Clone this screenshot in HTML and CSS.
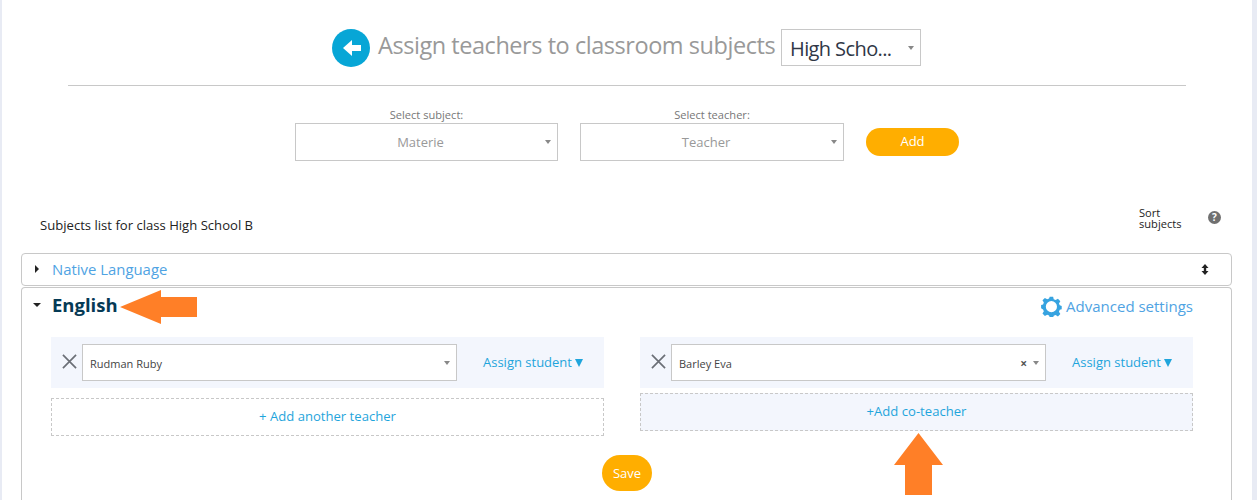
FILE: index.html
```html
<!DOCTYPE html>
<html lang="en">
<head>
<meta charset="utf-8">
<title>Assign teachers to classroom subjects</title>
<link rel="stylesheet" href="styles.css">
</head>
<body>
<main class="page">
  <header class="title-row">
    <svg class="back" viewBox="0 0 38 38" aria-hidden="true"><circle cx="19" cy="19" r="19" fill="#07a6d6"/><path d="M11 19l9-8v5h9v6h-9v5z" fill="#fff"/></svg>
    <h1 class="title">Assign teachers to classroom subjects</h1>
    <div class="select select-class"><span class="select-text">High Scho...</span><i class="caret"></i></div>
  </header>
  <hr class="rule">
  <section class="filters">
    <div class="field">
      <label class="field-label">Select subject:</label>
      <div class="select select-filter select-subject"><span class="select-center">Materie</span><i class="caret"></i></div>
    </div>
    <div class="field">
      <label class="field-label">Select teacher:</label>
      <div class="select select-filter select-teacher"><span class="select-center">Teacher</span><i class="caret"></i></div>
    </div>
    <button class="btn btn-add">Add</button>
  </section>
  <section class="list-head">
    <div class="list-title">Subjects list for class High School B</div>
    <div class="sort">Sort<br>subjects</div>
    <span class="help">?</span>
  </section>
  <section class="accordion">
    <div class="acc-row acc-closed">
      <i class="tri-right"></i>
      <span class="acc-name">Native Language</span>
      <svg class="updown" viewBox="0 0 8 11" aria-hidden="true"><path d="M4 0l3.500 4H5.200v3h2.300L4 11 .5 7h2.300V4H.5z" fill="#222"/></svg>
    </div>
    <div class="acc-row acc-open">
      <div class="acc-head">
        <i class="tri-down"></i>
        <span class="acc-name-open">English</span>
        <a class="advanced">
          <svg class="gear" viewBox="0 0 22 22" aria-hidden="true"><path fill="#36a3e0" fill-rule="evenodd" d="M9 0h4l.7 3 2.200.9 2.700-1.600 2.800 2.800-1.600 2.700.9 2.200 2.300.7v3.800l-2.300.7-.9 2.200 1.600 2.700-2.800 2.800-2.700-1.600-2.200.9L13 24H9l-.7-2.300-2.200-.9-2.700 1.600-2.800-2.800 1.600-2.700-.9-2.200L-1 13.300V9.700l2.300-.7.9-2.200L.6 4.100l2.800-2.800 2.700 1.600 2.200-.9zM11 5a6.500 6.500 0 1 0 0 13 6.500 6.500 0 0 0 0-13z" transform="translate(1 .8) scale(.9)"/></svg>
          Advanced settings
        </a>
      </div>
      <div class="teachers">
        <div class="teacher-col">
          <div class="band">
            <svg class="close" viewBox="0 0 16 16" aria-hidden="true"><path d="M1 1l14 14M15 1L1 15" stroke="#6b6f76" stroke-width="1.800" fill="none"/></svg>
            <div class="select select-teacher-name"><span class="select-text">Rudman Ruby</span><i class="caret"></i></div>
            <a class="assign">Assign student<i class="tri-blue"></i></a>
          </div>
          <div class="dashed dashed-plain">+ Add another teacher</div>
        </div>
        <div class="teacher-col">
          <div class="band">
            <svg class="close" viewBox="0 0 16 16" aria-hidden="true"><path d="M1 1l14 14M15 1L1 15" stroke="#6b6f76" stroke-width="1.800" fill="none"/></svg>
            <div class="select select-teacher-name"><span class="select-text">Barley Eva</span><span class="clear">×</span><i class="caret"></i></div>
            <a class="assign">Assign student<i class="tri-blue"></i></a>
          </div>
          <div class="dashed dashed-fill">+Add co-teacher</div>
        </div>
      </div>
      <div class="save-row"><button class="btn btn-save">Save</button></div>
    </div>
  </section>
</main>
<svg class="arrow arrow-left" viewBox="0 0 77 34" aria-hidden="true"><path d="M0 17L41 0v7h36v20H41v7z" fill="#ff7f27"/></svg>
<svg class="arrow arrow-up" viewBox="0 0 49 62" aria-hidden="true"><path d="M24.500 0L49 32H38v30H11V32H0z" fill="#ff7f27"/></svg>
</body>
</html>
```
FILE: styles.css
```css
* { box-sizing: border-box; }
html, body { margin: 0; height: 500px; overflow: hidden; }
body {
  background: #e8ebf4;
  font-family: "Open Sans", sans-serif;
  padding: 0 5px 0 2px;
  position: relative;
}
.page {
  background: #fff;
  height: 500px;
  padding-top: 29px;
  overflow: hidden;
}
.title-row {
  display: flex;
  align-items: flex-start;
  height: 38px;
  padding-left: 330px;
}
.back { width: 38px; height: 38px; flex: none; }
.title {
  margin: 0 0 0 8px;
  font-size: 23.500px;
  font-weight: 400;
  letter-spacing: -0.45px;
  line-height: 33px;
  color: #999;
  white-space: nowrap;
  width: 403px;
}
.select {
  position: relative;
  display: flex;
  align-items: center;
  background: #fff;
  border: 1px solid #c8c8c8;
}
.caret {
  position: absolute;
  top: 50%;
  right: 6px;
  margin-top: -2px;
  border-left: 3.500px solid transparent;
  border-right: 3.500px solid transparent;
  border-top: 4px solid #888;
}
.select-class {
  width: 140px;
  height: 37px;
  padding: 2px 0 0 8px;
  font-size: 20px;
  letter-spacing: -0.6px;
  color: #2f3746;
}
.rule {
  margin: 18px 0 0 66px;
  width: 1118px;
  height: 1px;
  border: 0;
  background: #c8c8c8;
}
.filters {
  display: flex;
  align-items: flex-end;
  margin-top: 21px;
  padding-left: 293px;
}
.field { display: flex; flex-direction: column; align-items: center; }
.field + .field { margin-left: 22px; }
.field-label {
  font-size: 11.100px;
  line-height: 15px;
  height: 16px;
  color: #777;
}
.select-filter { height: 38px; justify-content: center; }
.select-subject { width: 263px; }
.select-teacher { width: 264px; }
.select-center { font-size: 13px; color: #999; padding-right: 12px; }
.btn {
  border: 0;
  background: #ffae00;
  color: #fff;
  font: 400 13px "Open Sans", sans-serif;
  padding: 0;
}
.btn-add {
  width: 93px;
  height: 28px;
  margin: 0 0 5px 22px;
  border-radius: 14px;
  padding-bottom: 2px;
}
.list-head {
  position: relative;
  height: 92px;
}
.list-title {
  position: absolute;
  left: 38px;
  top: 55px;
  font-size: 13.100px;
  line-height: 18px;
  color: #222;
}
.sort {
  position: absolute;
  left: 1137px;
  top: 46px;
  font-size: 11.100px;
  line-height: 11px;
  color: #222;
}
.help {
  position: absolute;
  left: 1206px;
  top: 50px;
  width: 13px;
  height: 13px;
  border-radius: 50%;
  background: #707070;
  color: #fff;
  font-size: 10px;
  font-weight: 700;
  line-height: 13px;
  text-align: center;
}
.accordion { margin: 0 20px 0 19px; }
.acc-row { border: 1px solid #c8c8c8; border-radius: 4px; }
.acc-closed {
  display: flex;
  align-items: center;
  height: 33px;
  margin-bottom: 1px;
  padding: 0 22px 1px 13px;
}
.tri-right {
  border-top: 4px solid transparent;
  border-bottom: 4px solid transparent;
  border-left: 4px solid #222;
}
.acc-name {
  margin-left: 13px;
  font-size: 14.900px;
  color: #4fa3e3;
}
.updown { width: 8px; height: 11px; margin-left: auto; }
.acc-open {
  height: 230px;
  border-bottom: 0;
  border-bottom-left-radius: 0;
  border-bottom-right-radius: 0;
}
.acc-head {
  display: flex;
  align-items: center;
  height: 37px;
  padding: 0 38px 4px 11px;
}
.tri-down {
  border-left: 4px solid transparent;
  border-right: 4px solid transparent;
  border-top: 4px solid #222;
}
.acc-name-open {
  margin-left: 11px;
  font-size: 18.500px;
  font-weight: 700;
  color: #053a55;
}
.advanced {
  display: flex;
  align-items: center;
  margin-left: auto;
  font-size: 15px;
  color: #4fa3e3;
  position: relative;
  top: 1px;
}
.gear { width: 21px; height: 21px; margin-right: 5px; position: relative; left: 1px; top: 1px; }
.teachers {
  display: flex;
  gap: 36px;
  margin-top: 12px;
  padding-left: 29px;
}
.teacher-col { width: 553px; }
.band {
  display: flex;
  align-items: center;
  height: 51px;
  padding-left: 11px;
  background: #f3f6fd;
}
.close { width: 15px; height: 15px; flex: none; position: relative; top: -1px; }
.select-teacher-name {
  width: 375px;
  height: 37px;
  margin-left: 5px;
  padding: 2px 0 0 7px;
  font-size: 11px;
  color: #444;
}
.clear {
  position: absolute;
  right: 18px;
  top: 12px;
  font-size: 12px;
  font-weight: 700;
  line-height: 14px;
  color: #555;
}
.assign {
  margin-left: 26px;
  font-size: 13px;
  color: #1fa5dc;
  white-space: nowrap;
  padding-bottom: 2px;
}
.tri-blue {
  display: inline-block;
  margin-left: 3px;
  border-left: 4.500px solid transparent;
  border-right: 4.500px solid transparent;
  border-top: 8px solid #1fa5dc;
}
.dashed {
  height: 38px;
  display: flex;
  align-items: center;
  justify-content: center;
  border: 1px dashed #c8c8c8;
  font-size: 13.100px;
  color: #1fa5dc;
  padding-bottom: 2px;
}
.dashed-plain { margin-top: 10px; }
.dashed-fill { margin-top: 5px; background: #f3f6fd; }
.save-row {
  display: flex;
  margin-top: 19px;
  padding-left: 580px;
}
.btn-save {
  width: 50px;
  height: 36px;
  border-radius: 18px;
}
.arrow { position: absolute; }
.arrow-left { left: 120px; top: 290px; width: 77px; height: 34px; }
.arrow-up { left: 894px; top: 433px; width: 49px; height: 62px; }
```
